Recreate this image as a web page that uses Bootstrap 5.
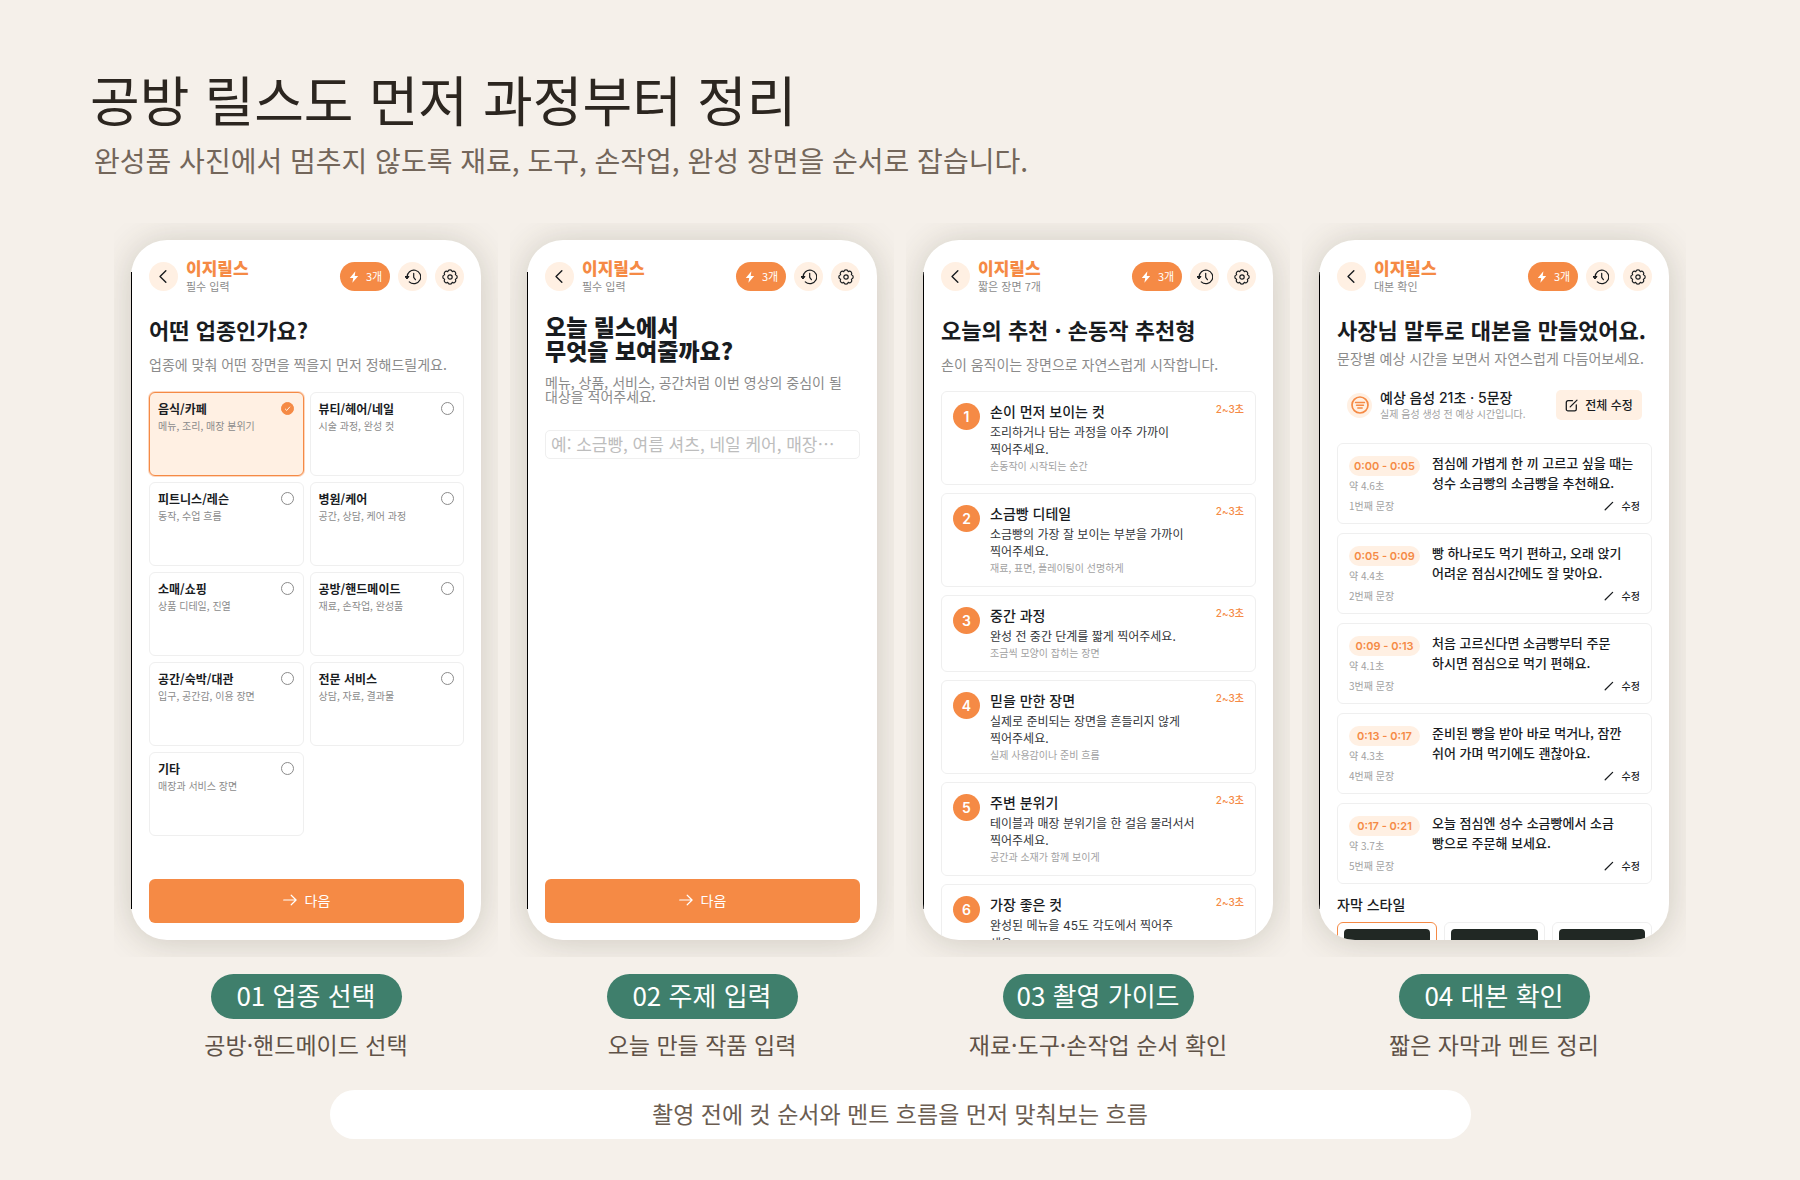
<!DOCTYPE html>
<html lang="ko">
<head>
<meta charset="utf-8">
<meta name="viewport" content="width=device-width, initial-scale=1">
<title>공방 릴스도 먼저 과정부터 정리</title>
<link rel="stylesheet" href="https://cdn.jsdelivr.net/npm/bootstrap@5.3.0/dist/css/bootstrap.min.css">
<style>
:root{--brand:#f58a45;--tint:#fff0e3;--ink:#191c1f;--muted:#8b8b8b;--line:#efefef;--green:#3f7f6c}
body{background:#f5f0ea;color:var(--ink);font-family:"Noto Sans CJK KR",sans-serif;word-break:keep-all}
.page-head{padding:66px 90px 60px}
.page-head h1{font-size:54px;line-height:66px;font-weight:400;color:#2c2620}
.page-head p{font-size:28px;line-height:40px;margin-top:8px;color:#73665a;padding-left:4px}
.flow{max-width:1538px;gap:46px}
.step{flex:1 1 0;min-width:0}
.frame{clip-path:inset(-17px)}
.phone{aspect-ratio:1/2;background:#fff;border-radius:36px;padding:22px 17px 17px 18px;box-shadow:0 2px 34px rgba(70,65,40,.22)}
.edge{left:0;top:32px;bottom:31px;width:1px;background:#000}
.round{width:29px;height:29px;background:var(--tint);color:var(--ink)}
.bar{gap:8px;height:29px}
.brand-name{font-size:17px;line-height:19px;font-weight:900;color:var(--brand)}
.brand-sub{font-size:11px;line-height:18px;color:var(--muted)}
.credit{width:50px;height:29px;background:var(--brand);font-size:11px;gap:6px}
.ask{font-size:22px;line-height:30px;font-weight:700;margin:23px 0 0;white-space:nowrap}
.ask-heavy{font-size:23px;line-height:24px;font-weight:900}
.hint{font-size:14px;line-height:20px;color:var(--muted);margin:10px 0 0;white-space:nowrap}
.hint-tight{line-height:14px;margin-top:13px}
.kinds{display:grid;grid-template-columns:1fr 1fr;grid-auto-rows:84px;gap:6px;margin-top:18px}
.kind{border:1px solid var(--line);border-radius:6px;padding:7px 9px 0 8px}
.kind b{font-size:12px;line-height:17px;font-weight:700}
.kind span{font-size:10px;line-height:17px;color:var(--muted)}
.kind.on{border-color:var(--brand);background:var(--tint);box-shadow:0 0 0 1px rgba(245,138,69,.35)}
.kind .form-check-input{width:13px;height:13px;margin:2px 0 0;border-color:#8b8b8b;flex:none}
.kind .form-check-input:checked{background-color:var(--brand);border-color:var(--brand);background-image:url("data:image/svg+xml,%3Csvg xmlns='http://www.w3.org/2000/svg' viewBox='0 0 13 13'%3E%3Cpath d='M3.6 6.8l2 2 3.8-4.4' fill='none' stroke='%23fff'/%3E%3C/svg%3E")}
.next{height:44px;background:var(--brand);color:#fff;border-radius:6px;font-size:14px;gap:8px;padding:0 0 2px}
.topic{height:29px;margin-top:27px;border-color:var(--line);border-radius:5px;padding:0 5px 2px;font-size:17px}
.topic::placeholder{color:#bdbdbd}
.cuts{gap:8px;margin-top:17px}
.cut{border:1px solid var(--line);border-radius:6px;padding:10px 11px 10px 11px;gap:10px}
.no{width:27px;height:27px;margin-top:1px;background:var(--brand);color:#fff;font:600 14px/27px Inter,sans-serif;flex:none}
.cut h3{font-size:14px;line-height:19px;font-weight:500;margin:0 0 2px}
.cut p{font-size:12px;line-height:17px;margin:0;color:#33363a;white-space:nowrap}
.cut small{font-size:10px;line-height:17px;color:#a2a2a2}
.cut time{font:500 10px/15px Inter,"Noto Sans CJK KR",sans-serif;color:var(--brand);white-space:nowrap}
.cut .en{font-family:Inter,sans-serif}
.sum{margin-top:21px;padding:0 10px}
.sum-dot{width:25px;height:25px;background:var(--tint);color:var(--brand)}
.sum b{font:500 14px/17px Inter,"Noto Sans CJK KR",sans-serif;white-space:nowrap}
.sum small{font-size:10px;line-height:15px;color:#a2a2a2;white-space:nowrap}
.edit-all{width:86px;height:30px;background:var(--tint);border-radius:5px;font-size:12px;font-weight:500;color:var(--ink);gap:7px;white-space:nowrap}
.lines{gap:9px;margin-top:22px}
.line-card{height:81px;border:1px solid var(--line);border-radius:6px;padding:12px 8px 0 11px}
.line-card p{font-size:13px;line-height:20px;font-weight:500;margin:-3px 0 0;padding-left:12px;white-space:nowrap}
.span-pill{width:71px;height:20px;background:var(--tint);color:var(--brand);font:600 11px/20px Inter,sans-serif;border-radius:10px}
.line-card small{font-size:10px;line-height:20px;color:#a2a2a2;white-space:nowrap}
.fix{font-size:10px;line-height:20px;font-weight:500;color:var(--ink);gap:8px;margin-right:3px}
.style-title{font-size:14px;line-height:20px;font-weight:500;margin:10px 0 8px}
.styles{gap:7px}
.style-card{flex:1;height:60px;border:1px solid var(--line);border-radius:6px;padding:6px}
.style-card.on{border-color:var(--brand)}
.style-card i{height:46px;background:#212824;border-radius:4px}
.tag{width:191px;max-width:100%;height:45px;margin-top:34px;background:var(--green);color:#fff;font-size:26px;line-height:41px}
.cap{font-size:23px;line-height:30px;margin:10px 0 0;color:#5f5247;white-space:nowrap}
.closing{max-width:1141px;margin-top:31px;height:49px;background:#fff;color:#6b5d51;font-size:23px;line-height:47px}
svg{fill:none;stroke:currentColor;stroke-linecap:round;stroke-linejoin:round;flex:none}
</style>
<script src="https://cdn.jsdelivr.net/npm/bootstrap@5.3.0/dist/js/bootstrap.bundle.min.js"></script>
</head>
<body>
<svg class="d-none" aria-hidden="true">
<symbol id="i-back" viewBox="0 0 16 16"><path d="M10.500 1.800L4.300 8l6.200 6.200" stroke-width="1.500"/></symbol>
<symbol id="i-bolt" viewBox="0 0 12 12"><path d="M7.400.2L1.800 6.900h3.400L4.400 11.800 10.200 4.900H6.700z" fill="currentColor" stroke="none"/></symbol>
<symbol id="i-clock" viewBox="0 0 16 16"><path d="M2.100 8.200A6.800 6.800 0 1 1 4.300 12.900" stroke-width="1.200"/><path d="M8.700 4.300v4l1.700 2.400" stroke-width="1.200"/><path d="M.3 7.500h3.700L2.200 9.700z" fill="currentColor"/></symbol>
<symbol id="i-gear" viewBox="0 0 16 16"><path d="M13.360 5.780C15.830 6.340 15.830 9.660 13.360 10.220C14.710 12.360 12.360 14.710 10.220 13.360C9.660 15.830 6.340 15.830 5.780 13.360C3.640 14.710 1.290 12.360 2.640 10.220C.17 9.660 .17 6.340 2.640 5.780C1.290 3.640 3.640 1.290 5.780 2.640C6.340 .17 9.660 .17 10.220 2.640C12.360 1.290 14.710 3.640 13.360 5.780z" stroke-width="1.200"/><circle cx="8" cy="8" r="2.200" stroke-width="1.200"/></symbol>
<symbol id="i-arrow" viewBox="0 0 14 14"><path d="M.7 7h12.400M8.200 2.200L13.100 7l-4.900 4.800" stroke-width="1.200"/></symbol>
<symbol id="i-script" viewBox="0 0 18 18"><circle cx="9" cy="9" r="8" stroke-width="1.700"/><path d="M4.500 6.500h9M5.500 9.300h7M6.800 12h4.400" stroke-width="1.400"/></symbol>
<symbol id="i-edit" viewBox="0 0 13 13"><path d="M7.500 1.700H3A1.700 1.700 0 0 0 1.300 3.400v6.800A1.700 1.700 0 0 0 3 11.900h6.600a1.700 1.700 0 0 0 1.700-1.700V5.800M5.200 7.900L12 1.100" stroke-width="1.300"/></symbol>
<symbol id="i-pen" viewBox="0 0 10 10"><path d="M1.200 8.800L8.600 1.400" stroke-width="1.300"/></symbol>
</svg>

<header class="page-head">
<h1 class="mb-0">공방 릴스도 먼저 과정부터 정리</h1>
<p class="mb-0">완성품 사진에서 멈추지 않도록 재료, 도구, 손작업, 완성 장면을 순서로 잡습니다.</p>
</header>

<main>
<div class="flow d-flex mx-auto">

<section class="step d-flex flex-column align-items-center">
<div class="frame w-100"><div class="phone position-relative d-flex flex-column">
<span class="edge position-absolute"></span>
<div class="bar d-flex align-items-center">
<button class="round btn p-0 border-0 rounded-circle d-flex align-items-center justify-content-center" aria-label="뒤로"><svg width="15" height="15"><use href="#i-back"/></svg></button>
<div class="me-auto"><div class="brand-name">이지릴스</div><div class="brand-sub">필수 입력</div></div>
<span class="credit rounded-pill text-white d-flex align-items-center justify-content-center"><svg width="12" height="12"><use href="#i-bolt"/></svg>3개</span>
<button class="round btn p-0 border-0 rounded-circle d-flex align-items-center justify-content-center" aria-label="기록"><svg width="16" height="16"><use href="#i-clock"/></svg></button>
<button class="round btn p-0 border-0 rounded-circle d-flex align-items-center justify-content-center" aria-label="설정"><svg width="16" height="16"><use href="#i-gear"/></svg></button>
</div>
<h2 class="ask">어떤 업종인가요?</h2>
<p class="hint">업종에 맞춰 어떤 장면을 찍을지 먼저 정해드릴게요.</p>
<div class="kinds">
<label class="kind on d-flex justify-content-between"><div class="d-flex flex-column"><b>음식/카페</b><span>메뉴, 조리, 매장 분위기</span></div><input class="form-check-input" type="radio" name="kind" checked></label>
<label class="kind d-flex justify-content-between"><div class="d-flex flex-column"><b>뷰티/헤어/네일</b><span>시술 과정, 완성 컷</span></div><input class="form-check-input" type="radio" name="kind"></label>
<label class="kind d-flex justify-content-between"><div class="d-flex flex-column"><b>피트니스/레슨</b><span>동작, 수업 흐름</span></div><input class="form-check-input" type="radio" name="kind"></label>
<label class="kind d-flex justify-content-between"><div class="d-flex flex-column"><b>병원/케어</b><span>공간, 상담, 케어 과정</span></div><input class="form-check-input" type="radio" name="kind"></label>
<label class="kind d-flex justify-content-between"><div class="d-flex flex-column"><b>소매/쇼핑</b><span>상품 디테일, 진열</span></div><input class="form-check-input" type="radio" name="kind"></label>
<label class="kind d-flex justify-content-between"><div class="d-flex flex-column"><b>공방/핸드메이드</b><span>재료, 손작업, 완성품</span></div><input class="form-check-input" type="radio" name="kind"></label>
<label class="kind d-flex justify-content-between"><div class="d-flex flex-column"><b>공간/숙박/대관</b><span>입구, 공간감, 이용 장면</span></div><input class="form-check-input" type="radio" name="kind"></label>
<label class="kind d-flex justify-content-between"><div class="d-flex flex-column"><b>전문 서비스</b><span>상담, 자료, 결과물</span></div><input class="form-check-input" type="radio" name="kind"></label>
<label class="kind d-flex justify-content-between"><div class="d-flex flex-column"><b>기타</b><span>매장과 서비스 장면</span></div><input class="form-check-input" type="radio" name="kind"></label>
</div>
<button class="next btn border-0 w-100 mt-auto d-flex align-items-center justify-content-center"><svg width="14" height="14"><use href="#i-arrow"/></svg>다음</button>
</div></div>
<div class="tag rounded-pill text-center">01 업종 선택</div>
<p class="cap">공방·핸드메이드 선택</p>
</section>

<section class="step d-flex flex-column align-items-center">
<div class="frame w-100"><div class="phone position-relative d-flex flex-column">
<span class="edge position-absolute"></span>
<div class="bar d-flex align-items-center">
<button class="round btn p-0 border-0 rounded-circle d-flex align-items-center justify-content-center" aria-label="뒤로"><svg width="15" height="15"><use href="#i-back"/></svg></button>
<div class="me-auto"><div class="brand-name">이지릴스</div><div class="brand-sub">필수 입력</div></div>
<span class="credit rounded-pill text-white d-flex align-items-center justify-content-center"><svg width="12" height="12"><use href="#i-bolt"/></svg>3개</span>
<button class="round btn p-0 border-0 rounded-circle d-flex align-items-center justify-content-center" aria-label="기록"><svg width="16" height="16"><use href="#i-clock"/></svg></button>
<button class="round btn p-0 border-0 rounded-circle d-flex align-items-center justify-content-center" aria-label="설정"><svg width="16" height="16"><use href="#i-gear"/></svg></button>
</div>
<h2 class="ask ask-heavy">오늘 릴스에서<br>무엇을 보여줄까요?</h2>
<p class="hint hint-tight">메뉴, 상품, 서비스, 공간처럼 이번 영상의 중심이 될<br>대상을 적어주세요.</p>
<input class="topic form-control" type="text" aria-label="릴스 주제" placeholder="예: 소금빵, 여름 셔츠, 네일 케어, 매장⋯">
<button class="next btn border-0 w-100 mt-auto d-flex align-items-center justify-content-center"><svg width="14" height="14"><use href="#i-arrow"/></svg>다음</button>
</div></div>
<div class="tag rounded-pill text-center">02 주제 입력</div>
<p class="cap">오늘 만들 작품 입력</p>
</section>

<section class="step d-flex flex-column align-items-center">
<div class="frame w-100"><div class="phone position-relative d-flex flex-column overflow-hidden">
<span class="edge position-absolute"></span>
<div class="bar d-flex align-items-center flex-shrink-0">
<button class="round btn p-0 border-0 rounded-circle d-flex align-items-center justify-content-center" aria-label="뒤로"><svg width="15" height="15"><use href="#i-back"/></svg></button>
<div class="me-auto"><div class="brand-name">이지릴스</div><div class="brand-sub">짧은 장면 7개</div></div>
<span class="credit rounded-pill text-white d-flex align-items-center justify-content-center"><svg width="12" height="12"><use href="#i-bolt"/></svg>3개</span>
<button class="round btn p-0 border-0 rounded-circle d-flex align-items-center justify-content-center" aria-label="기록"><svg width="16" height="16"><use href="#i-clock"/></svg></button>
<button class="round btn p-0 border-0 rounded-circle d-flex align-items-center justify-content-center" aria-label="설정"><svg width="16" height="16"><use href="#i-gear"/></svg></button>
</div>
<h2 class="ask">오늘의 추천 · 손동작 추천형</h2>
<p class="hint">손이 움직이는 장면으로 자연스럽게 시작합니다.</p>
<div class="cuts d-flex flex-column flex-shrink-0">
<article class="cut d-flex"><span class="no rounded-circle text-center">1</span><div class="me-auto"><h3>손이 먼저 보이는 컷</h3><p>조리하거나 담는 과정을 아주 가까이<br>찍어주세요.</p><small class="d-block">손동작이 시작되는 순간</small></div><time>2~3초</time></article>
<article class="cut d-flex"><span class="no rounded-circle text-center">2</span><div class="me-auto"><h3>소금빵 디테일</h3><p>소금빵의 가장 잘 보이는 부분을 가까이<br>찍어주세요.</p><small class="d-block">재료, 표면, 플레이팅이 선명하게</small></div><time>2~3초</time></article>
<article class="cut d-flex"><span class="no rounded-circle text-center">3</span><div class="me-auto"><h3>중간 과정</h3><p>완성 전 중간 단계를 짧게 찍어주세요.</p><small class="d-block">조금씩 모양이 잡히는 장면</small></div><time>2~3초</time></article>
<article class="cut d-flex"><span class="no rounded-circle text-center">4</span><div class="me-auto"><h3>믿을 만한 장면</h3><p>실제로 준비되는 장면을 흔들리지 않게<br>찍어주세요.</p><small class="d-block">실제 사용감이나 준비 흐름</small></div><time>2~3초</time></article>
<article class="cut d-flex"><span class="no rounded-circle text-center">5</span><div class="me-auto"><h3>주변 분위기</h3><p>테이블과 매장 분위기을 한 걸음 물러서서<br>찍어주세요.</p><small class="d-block">공간과 소재가 함께 보이게</small></div><time>2~3초</time></article>
<article class="cut d-flex"><span class="no rounded-circle text-center">6</span><div class="me-auto"><h3>가장 좋은 컷</h3><p>완성된 메뉴을 <span class="en">45</span>도 각도에서 찍어주<br>세요.</p></div><time>2~3초</time></article>
</div>
</div></div>
<div class="tag rounded-pill text-center">03 촬영 가이드</div>
<p class="cap">재료·도구·손작업 순서 확인</p>
</section>

<section class="step d-flex flex-column align-items-center">
<div class="frame w-100"><div class="phone position-relative d-flex flex-column overflow-hidden">
<span class="edge position-absolute"></span>
<div class="bar d-flex align-items-center flex-shrink-0">
<button class="round btn p-0 border-0 rounded-circle d-flex align-items-center justify-content-center" aria-label="뒤로"><svg width="15" height="15"><use href="#i-back"/></svg></button>
<div class="me-auto"><div class="brand-name">이지릴스</div><div class="brand-sub">대본 확인</div></div>
<span class="credit rounded-pill text-white d-flex align-items-center justify-content-center"><svg width="12" height="12"><use href="#i-bolt"/></svg>3개</span>
<button class="round btn p-0 border-0 rounded-circle d-flex align-items-center justify-content-center" aria-label="기록"><svg width="16" height="16"><use href="#i-clock"/></svg></button>
<button class="round btn p-0 border-0 rounded-circle d-flex align-items-center justify-content-center" aria-label="설정"><svg width="16" height="16"><use href="#i-gear"/></svg></button>
</div>
<h2 class="ask">사장님 말투로 대본을 만들었어요.</h2>
<p class="hint mt-0 pt-1">문장별 예상 시간을 보면서 자연스럽게 다듬어보세요.</p>
<div class="sum d-flex align-items-center">
<span class="sum-dot rounded-circle d-flex align-items-center justify-content-center me-2"><svg width="18" height="18"><use href="#i-script"/></svg></span>
<div class="d-flex flex-column me-auto"><b>예상 음성 21초 · 5문장</b><small>실제 음성 생성 전 예상 시간입니다.</small></div>
<button class="edit-all btn p-0 border-0 d-flex align-items-center justify-content-center"><svg width="13" height="13"><use href="#i-edit"/></svg>전체 수정</button>
</div>
<div class="lines d-flex flex-column">
<article class="line-card"><div class="d-flex"><div class="d-flex flex-column"><span class="span-pill text-center">0:00 - 0:05</span><small>약 4.6초</small></div><p>점심에 가볍게 한 끼 고르고 싶을 때는<br>성수 소금빵의 소금빵을 추천해요.</p></div><div class="d-flex justify-content-between"><small>1번째 문장</small><button class="fix btn p-0 border-0 d-flex align-items-center"><svg width="10" height="10"><use href="#i-pen"/></svg>수정</button></div></article>
<article class="line-card"><div class="d-flex"><div class="d-flex flex-column"><span class="span-pill text-center">0:05 - 0:09</span><small>약 4.4초</small></div><p>빵 하나로도 먹기 편하고, 오래 앉기<br>어려운 점심시간에도 잘 맞아요.</p></div><div class="d-flex justify-content-between"><small>2번째 문장</small><button class="fix btn p-0 border-0 d-flex align-items-center"><svg width="10" height="10"><use href="#i-pen"/></svg>수정</button></div></article>
<article class="line-card"><div class="d-flex"><div class="d-flex flex-column"><span class="span-pill text-center">0:09 - 0:13</span><small>약 4.1초</small></div><p>처음 고르신다면 소금빵부터 주문<br>하시면 점심으로 먹기 편해요.</p></div><div class="d-flex justify-content-between"><small>3번째 문장</small><button class="fix btn p-0 border-0 d-flex align-items-center"><svg width="10" height="10"><use href="#i-pen"/></svg>수정</button></div></article>
<article class="line-card"><div class="d-flex"><div class="d-flex flex-column"><span class="span-pill text-center">0:13 - 0:17</span><small>약 4.3초</small></div><p>준비된 빵을 받아 바로 먹거나, 잠깐<br>쉬어 가며 먹기에도 괜찮아요.</p></div><div class="d-flex justify-content-between"><small>4번째 문장</small><button class="fix btn p-0 border-0 d-flex align-items-center"><svg width="10" height="10"><use href="#i-pen"/></svg>수정</button></div></article>
<article class="line-card"><div class="d-flex"><div class="d-flex flex-column"><span class="span-pill text-center">0:17 - 0:21</span><small>약 3.7초</small></div><p>오늘 점심엔 성수 소금빵에서 소금<br>빵으로 주문해 보세요.</p></div><div class="d-flex justify-content-between"><small>5번째 문장</small><button class="fix btn p-0 border-0 d-flex align-items-center"><svg width="10" height="10"><use href="#i-pen"/></svg>수정</button></div></article>
</div>
<h3 class="style-title">자막 스타일</h3>
<div class="styles d-flex">
<div class="style-card on"><i class="d-block"></i></div>
<div class="style-card"><i class="d-block"></i></div>
<div class="style-card"><i class="d-block"></i></div>
</div>
</div></div>
<div class="tag rounded-pill text-center">04 대본 확인</div>
<p class="cap">짧은 자막과 멘트 정리</p>
</section>

</div>
<div class="closing mx-auto rounded-pill text-center">촬영 전에 컷 순서와 멘트 흐름을 먼저 맞춰보는 흐름</div>
</main>
</body>
</html>
